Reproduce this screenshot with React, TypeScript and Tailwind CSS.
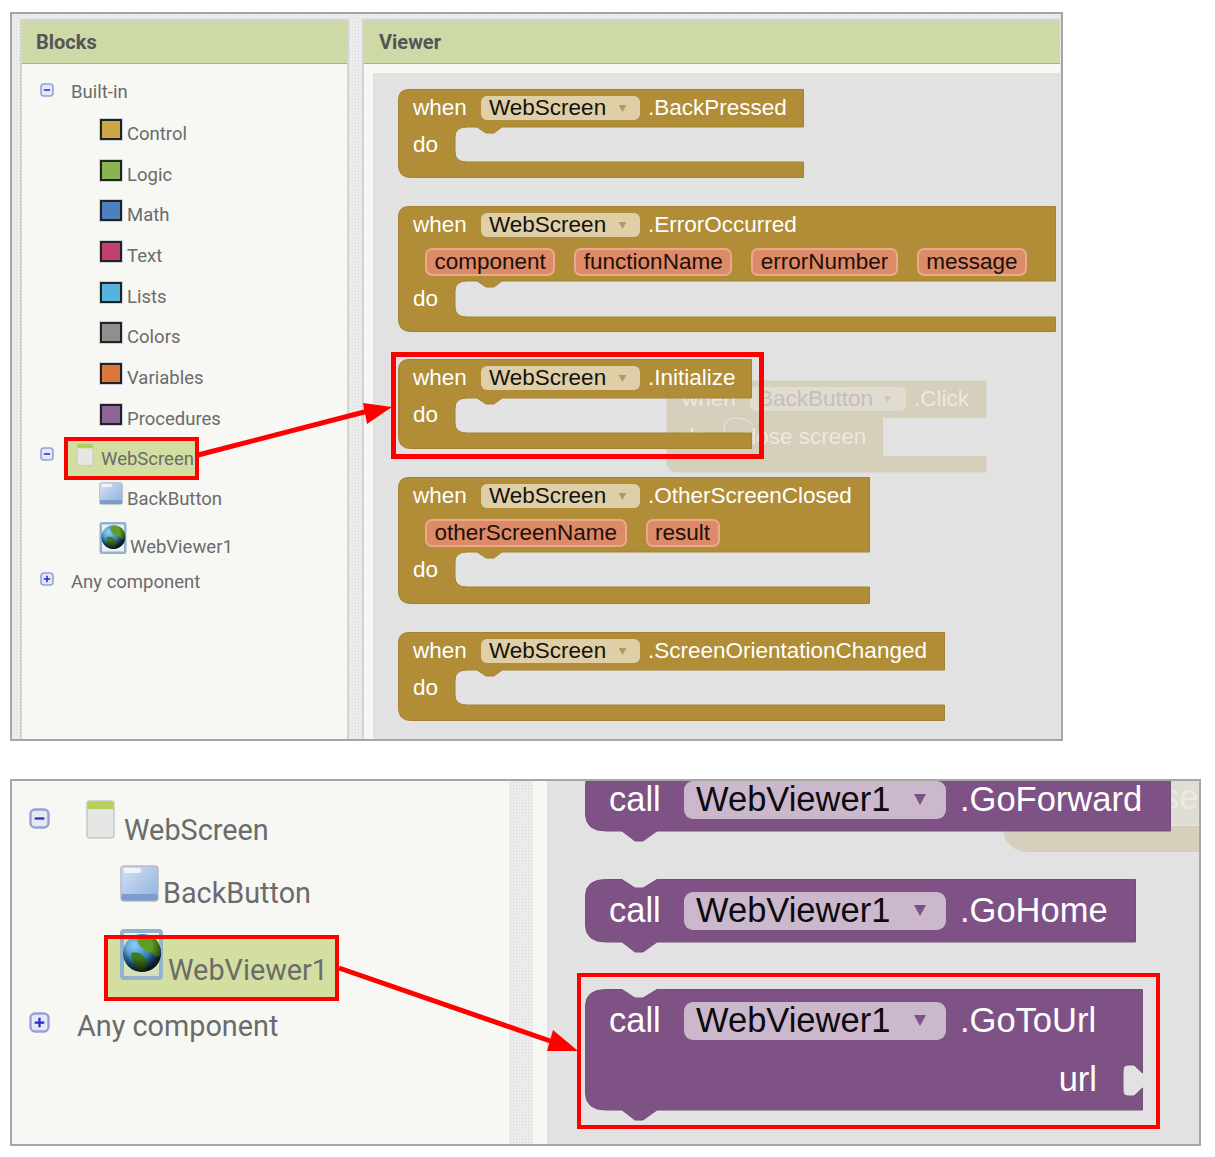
const CATEGORIES = [
  { name: "Control", color: "bg-[#c9a845]" },
  { name: "Logic", color: "bg-[#89b34e]" },
  { name: "Math", color: "bg-[#4d80bf]" },
  { name: "Text", color: "bg-[#c2406d]" },
  { name: "Lists", color: "bg-[#56b4dc]" },
  { name: "Colors", color: "bg-[#8f8f8f]" },
  { name: "Variables", color: "bg-[#dc773c]" },
  { name: "Procedures", color: "bg-[#8d6496]" },
];

const GOLD = "#b08d36";
const GOLD_EDGE = "#a3822f";
const PURPLE = "#7f5285";
const PURPLE_EDGE = "#745079";
const SANS = "font-['Liberation_Sans',Arial,sans-serif]";
const ROBOTO = "font-['Roboto',sans-serif] text-[#6b6b6b]";
const TEXTURE =
  "bg-[#ececec] bg-[radial-gradient(#dadada_1px,transparent_1px)] bg-size-[3px_3px]";

function hatPath(w: number, slotTop: number, slotBottom: number, h: number) {
  return `M.5,11 Q.5,.5 11,.5 H${w - 0.5} V${slotTop} H104 L96,${slotTop + 6} H88 L79,${slotTop} H69 Q57,${slotTop} 57,${slotTop + 10} V${slotBottom - 10} Q57,${slotBottom} 69,${slotBottom} H${w - 0.5} V${h - 0.5} H13 Q.5,${h - 0.5} .5,${h - 13} Z`;
}

function callPath(w: number, h: number, socket: boolean) {
  const right = socket
    ? `V84 L${w - 9},76 H${w - 15} Q${w - 20},76 ${w - 20},82 V101 Q${w - 20},107 ${w - 15},107 H${w - 9} L${w - 0.5},99 V${h}`
    : `V${h}`;
  return `M.5,17 Q.5,.5 21,.5 H37 L50,9 H58 L72,.5 H${w - 0.5} ${right} H72 L58,${h + 10} H50 L37,${h} H21 Q.5,${h} .5,${h - 17} Z`;
}

function Arrow({ color, className }: { color: string; className: string }) {
  return (
    <svg viewBox="0 0 10 9" className={className}>
      <path d="M0,0 H10 L5,9 Z" fill={color} />
    </svg>
  );
}

function WhenBlock({
  className,
  event,
  width,
  slotTop,
  slotBottom,
  height,
  params,
}: {
  className: string;
  event: string;
  width: number;
  slotTop: number;
  slotBottom: number;
  height: number;
  params?: string[];
}) {
  return (
    <div className={`absolute whitespace-nowrap text-[22.5px] leading-none text-white ${SANS} ${className}`}>
      <svg width={width} height={height} className="absolute left-0 top-0 overflow-visible">
        <path d={hatPath(width, slotTop, slotBottom, height)} fill={GOLD} stroke={GOLD_EDGE} />
      </svg>
      <div className="relative flex h-[38px] items-center pl-[15px]">
        <span className="w-[68px]">when</span>
        <div className="flex h-[24px] w-[159px] items-center justify-between rounded-[6px] bg-[#dfcfa8] pl-[8px] pr-[13px] text-[#14120c]">
          WebScreen
          <Arrow color="#b19a5f" className="h-[7px] w-[9px]" />
        </div>
        <span className="ml-[8px]">{event}</span>
      </div>
      {params && (
        <div className="relative flex h-[37px] items-start gap-[19px] pl-[27px] pt-[4px] text-[#1c1008]">
          {params.map((p) => (
            <div
              key={p}
              className="flex h-[28px] items-center rounded-[7px] border-2 border-[#eba98c] bg-[#dd8a68] px-[7.5px]"
            >
              {p}
            </div>
          ))}
        </div>
      )}
      <div className="relative flex h-[35px] items-center pl-[15px] pt-[2px]">do</div>
    </div>
  );
}

function CallBlock({
  className,
  method,
  width,
  height,
  socket,
}: {
  className: string;
  method: string;
  width: number;
  height: number;
  socket?: boolean;
}) {
  return (
    <div className={`absolute whitespace-nowrap text-[34.5px] leading-none text-white ${SANS} ${className}`}>
      <svg width={width} height={height + 10} className="absolute left-0 top-0 overflow-visible">
        <path d={callPath(width, height, !!socket)} fill={PURPLE} stroke={PURPLE_EDGE} />
      </svg>
      <div className="relative flex h-[63px] items-center pl-[24px]">
        <span className="w-[75px]">call</span>
        <div className="flex h-[38px] w-[262px] items-center justify-between rounded-[9px] bg-[#cbb8cd] pl-[12px] pr-[20px] text-[#0d0a10]">
          WebViewer1
          <Arrow color={PURPLE} className="h-[11px] w-[12px]" />
        </div>
        <span className="ml-[14px]">{method}</span>
      </div>
      {socket && <div className="relative flex h-[54px] items-center justify-end pr-[46px]">url</div>}
    </div>
  );
}

function GhostBlock() {
  return (
    <div className={`absolute left-[293px] top-[307px] h-[93px] w-[321px] whitespace-nowrap text-[22.5px] leading-none text-[#ebe8df] ${SANS}`}>
      <svg width="321" height="93" className="absolute left-0 top-0">
        <path d={hatPath(321, 38, 76, 93)} fill="#d6cfbc" />
        <rect x="57" y="38" width="160" height="39" fill="#d6cfbc" />
        <path d="M87,45 Q80,38 69,38 Q58,38 58,50 V70" fill="none" stroke="#e9e6dc" />
      </svg>
      <div className="relative flex h-[38px] items-center pl-[16px]">
        <span className="w-[68px]">when</span>
        <div className="flex h-[24px] w-[156px] items-center justify-between rounded-[6px] bg-[#e0dccf] pl-[8px] pr-[14px] text-[#c3c0b6]">
          BackButton
          <Arrow color="#cfc9b7" className="h-[7px] w-[9px]" />
        </div>
        <span className="ml-[8px]">.Click</span>
      </div>
      <div className="relative flex h-[38px] items-center pl-[16px]">
        <span className="w-[58px]">do</span>
        close screen
      </div>
    </div>
  );
}

function Expander({ open, className }: { open: boolean; className: string }) {
  return (
    <svg viewBox="0 0 14 14" className={`shrink-0 ${className}`}>
      <rect x="1" y="1" width="12" height="12" rx="3" fill="#e6e8f6" stroke="#98a0d6" strokeWidth="1.6" />
      <path d={open ? "M3.8,7 H10.2" : "M3.8,7 H10.2 M7,3.8 V10.2"} stroke="#2a2ad0" strokeWidth="1.5" />
    </svg>
  );
}

function ScreenIcon({ className }: { className: string }) {
  return (
    <svg viewBox="0 0 29 39" className={`shrink-0 ${className}`}>
      <rect x="1" y="1" width="27" height="37" rx="3" fill="#e6e6e4" stroke="#c6c6c4" strokeWidth="1.5" />
      <path d="M1.5,9 V4 Q1.5,1.5 4,1.5 H25 Q27.5,1.5 27.5,4 V9 Z" fill="#b3cf5c" />
    </svg>
  );
}

function ButtonIcon({ className }: { className: string }) {
  return (
    <svg viewBox="0 0 39 37" className={`shrink-0 ${className}`}>
      <defs>
        <linearGradient id="btnFace" x1="0" y1="0" x2="1" y2="1">
          <stop offset="0" stopColor="#d3e2f4" />
          <stop offset="1" stopColor="#8eb0dc" />
        </linearGradient>
      </defs>
      <rect x="1" y="1" width="37" height="35" rx="3" fill="url(#btnFace)" stroke="#b9bcc0" strokeWidth="1.5" />
      <rect x="1.5" y="29" width="36" height="6.5" rx="2" fill="#7c9ccb" />
      <rect x="4" y="3" width="17" height="5" rx="2" fill="#eef4fb" />
    </svg>
  );
}

function GlobeIcon({ className }: { className: string }) {
  return (
    <svg viewBox="0 0 43 51" className={`shrink-0 ${className}`}>
      <defs>
        <radialGradient id="globeSea" cx="0.3" cy="0.3" r="0.85">
          <stop offset="0" stopColor="#8fd0f4" />
          <stop offset="0.55" stopColor="#2c78b4" />
          <stop offset="1" stopColor="#0c2238" />
        </radialGradient>
        <radialGradient id="globeShade" cx="0.42" cy="0.3" r="0.75">
          <stop offset="0.45" stopColor="#000000" stopOpacity="0" />
          <stop offset="1" stopColor="#000000" stopOpacity="0.85" />
        </radialGradient>
      </defs>
      <rect x="2" y="2" width="39" height="47" rx="2" fill="#dfe6e6" fillOpacity="0.35" stroke="#93b2d0" strokeWidth="4" />
      <circle cx="22" cy="24" r="19" fill="url(#globeSea)" />
      <path d="M17,8 Q27,3 36,10 Q42,18 40,27 Q34,29 32,23 Q26,25 24,20 Q18,18 17,8 Z" fill="#5f9e22" />
      <path d="M11,24 Q20,22 25,29 Q30,34 24,42 Q16,42 14,35 Q11,29 11,24 Z" fill="#3f7a1c" />
      <circle cx="22" cy="24" r="19" fill="url(#globeShade)" />
    </svg>
  );
}

function PanelHeader({ title, className }: { title: string; className: string }) {
  return (
    <div className={`flex h-[43px] items-center border-b border-[#a9ad9c] bg-[#cddaa8] font-['Roboto',sans-serif] text-[20px] font-bold text-[#555555] ${className}`}>
      {title}
    </div>
  );
}

function BlocksTree() {
  return (
    <div className={`flex-1 bg-[#f7f8f3] text-[18.5px] leading-[22px] ${ROBOTO}`}>
      <div className="flex h-[50px] items-start pl-[18px] pt-[19px]">
        <Expander open className="h-[14px] w-[14px]" />
        <span className="-mt-[2px] ml-[17px]">Built-in</span>
      </div>
      {CATEGORIES.map((c, i) => (
        <div key={c.name} className={`flex pl-[78px] ${i === 7 ? "h-[38px]" : "h-[40.7px]"}`}>
          <div className={`mt-[5px] h-[21px] w-[22px] border-2 border-[#222222] outline outline-[#c9d3e2] ${c.color}`} />
          <span className="ml-[5px] mt-[9px]">{c.name}</span>
        </div>
      ))}
      <div className="flex h-[43px] pl-[18px]">
        <Expander open className="mt-[10px] h-[14px] w-[14px]" />
        <div className="ml-[10px] flex h-[43px] w-[135px] border-4 border-[#ff0000] bg-[#d3dfa0]">
          <ScreenIcon className="ml-[8px] mt-[2px] h-[23px] w-[18px]" />
          <span className="ml-[7px] mt-[7px]">WebScreen</span>
        </div>
      </div>
      <div className="flex h-[40px] pl-[77px]">
        <ButtonIcon className="mt-[2px] h-[23px] w-[24px]" />
        <span className="ml-[4px] mt-[8px]">BackButton</span>
      </div>
      <div className="flex h-[47px] pl-[77px]">
        <GlobeIcon className="mt-[2px] h-[32px] w-[28px]" />
        <span className="ml-[3px] mt-[16px]">WebViewer1</span>
      </div>
      <div className="flex pl-[18px] pt-[5px]">
        <Expander open={false} className="h-[14px] w-[14px]" />
        <span className="ml-[17px] mt-[-1px]">Any component</span>
      </div>
    </div>
  );
}

function ZoomTree() {
  return (
    <div className={`w-[497px] bg-[#f7f8f3] pt-[19px] text-[28.8px] leading-[34px] ${ROBOTO}`}>
      <div className="flex h-[57px] pl-[17px]">
        <Expander open className="mt-[7px] h-[23px] w-[21px]" />
        <ScreenIcon className="ml-[36px] h-[39px] w-[29px]" />
        <span className="ml-[9px] mt-[13px]">WebScreen</span>
      </div>
      <div className="flex h-[78px] pl-[108px]">
        <ButtonIcon className="mt-[8px] h-[37px] w-[39px]" />
        <span className="ml-[4px] mt-[19px]">BackButton</span>
      </div>
      <div className="relative ml-[92px] flex h-[66px] w-[235px] bg-[#d3dfa0]">
        <GlobeIcon className="-mt-[6px] ml-[16px] h-[51px] w-[43px]" />
        <span className="ml-[5px] mt-[18px]">WebViewer1</span>
        <div className="absolute inset-0 border-4 border-[#ff0000]" />
      </div>
      <div className="mt-[10px] flex pl-[17px]">
        <Expander open={false} className="h-[23px] w-[21px]" />
        <span className="-mt-[2px] ml-[27px]">Any component</span>
      </div>
    </div>
  );
}

export default function App() {
  return (
    <div className="relative h-[1157px] w-[1215px] overflow-hidden bg-white pl-[10px] pt-[12px]">
      <div className={`flex h-[729px] w-[1053px] gap-[13px] border-2 border-[#a6a6a6] pl-[8px] pt-[5px] ${TEXTURE}`}>
        <div className="flex w-[329px] flex-col border-x-2 border-t-2 border-[#d4d4d4]">
          <PanelHeader title="Blocks" className="pl-[14px]" />
          <BlocksTree />
        </div>
        <div className="flex w-[698px] flex-col border-l-2 border-t-2 border-[#d4d4d4]">
          <PanelHeader title="Viewer" className="pl-[15px]" />
          <div className="flex-1 bg-[#f7f8f3] pl-[9px] pt-[9px]">
            <div className="relative h-full overflow-hidden bg-[#e2e2e2]">
              <GhostBlock />
              <WhenBlock className="left-[25px] top-[16px]" event=".BackPressed" width={406} slotTop={38} slotBottom={73} height={89} />
              <WhenBlock
                className="left-[25px] top-[133px]"
                event=".ErrorOccurred"
                width={658}
                slotTop={75}
                slotBottom={111}
                height={126}
                params={["component", "functionName", "errorNumber", "message"]}
              />
              <WhenBlock className="left-[25px] top-[286px]" event=".Initialize" width={354} slotTop={39} slotBottom={74} height={90} />
              <WhenBlock
                className="left-[25px] top-[404px]"
                event=".OtherScreenClosed"
                width={472}
                slotTop={75}
                slotBottom={110}
                height={127}
                params={["otherScreenName", "result"]}
              />
              <WhenBlock className="left-[25px] top-[559px]" event=".ScreenOrientationChanged" width={547} slotTop={38} slotBottom={73} height={89} />
              <div className="absolute left-[18px] top-[279px] h-[107px] w-[373px] border-[5px] border-[#ff0000]" />
            </div>
          </div>
        </div>
      </div>

      <div className="mt-[38px] flex h-[367px] w-[1191px] border-2 border-[#a6a6a6]">
        <ZoomTree />
        <div className={`w-[24px] ${TEXTURE}`} />
        <div className="w-[14px] bg-[#f7f8f3]" />
        <div className={`relative flex-1 overflow-hidden bg-[#e2e2e2] ${SANS}`}>
          <div className="absolute left-[456px] top-0 h-[71px] w-[200px] rounded-bl-[24px] bg-[#d6cfbc]" />
          <div className="absolute left-[456px] top-0 h-[45px] w-[200px] border-b border-[#e6e3da] bg-[#dfddd5]" />
          <div className="absolute left-[615px] top-[-3px] text-[34.5px] leading-[38px] text-[#ebe9e2]">se</div>
          <CallBlock className="left-[38px] top-[-13px]" method=".GoForward" width={586} height={63} />
          <CallBlock className="left-[38px] top-[98px]" method=".GoHome" width={551} height={63} />
          <CallBlock className="left-[38px] top-[208px] w-[558px]" method=".GoToUrl" width={558} height={121} socket />
          <div className="absolute left-[30px] top-[192px] h-[156px] w-[583px] border-4 border-[#ff0000]" />
        </div>
      </div>

      {/* arrows drawn over both panels */}
      <svg width="1215" height="1157" className="pointer-events-none absolute left-0 top-0">
        <path d="M198,455 L372,410" stroke="#ff0000" strokeWidth="5" />
        <path d="M363,403 L392,407 L367,424 Z" fill="#ff0000" />
        <path d="M339,968 L556,1043" stroke="#ff0000" strokeWidth="5" />
        <path d="M553,1030 L578,1051 L547,1051 Z" fill="#ff0000" />
      </svg>
    </div>
  );
}
